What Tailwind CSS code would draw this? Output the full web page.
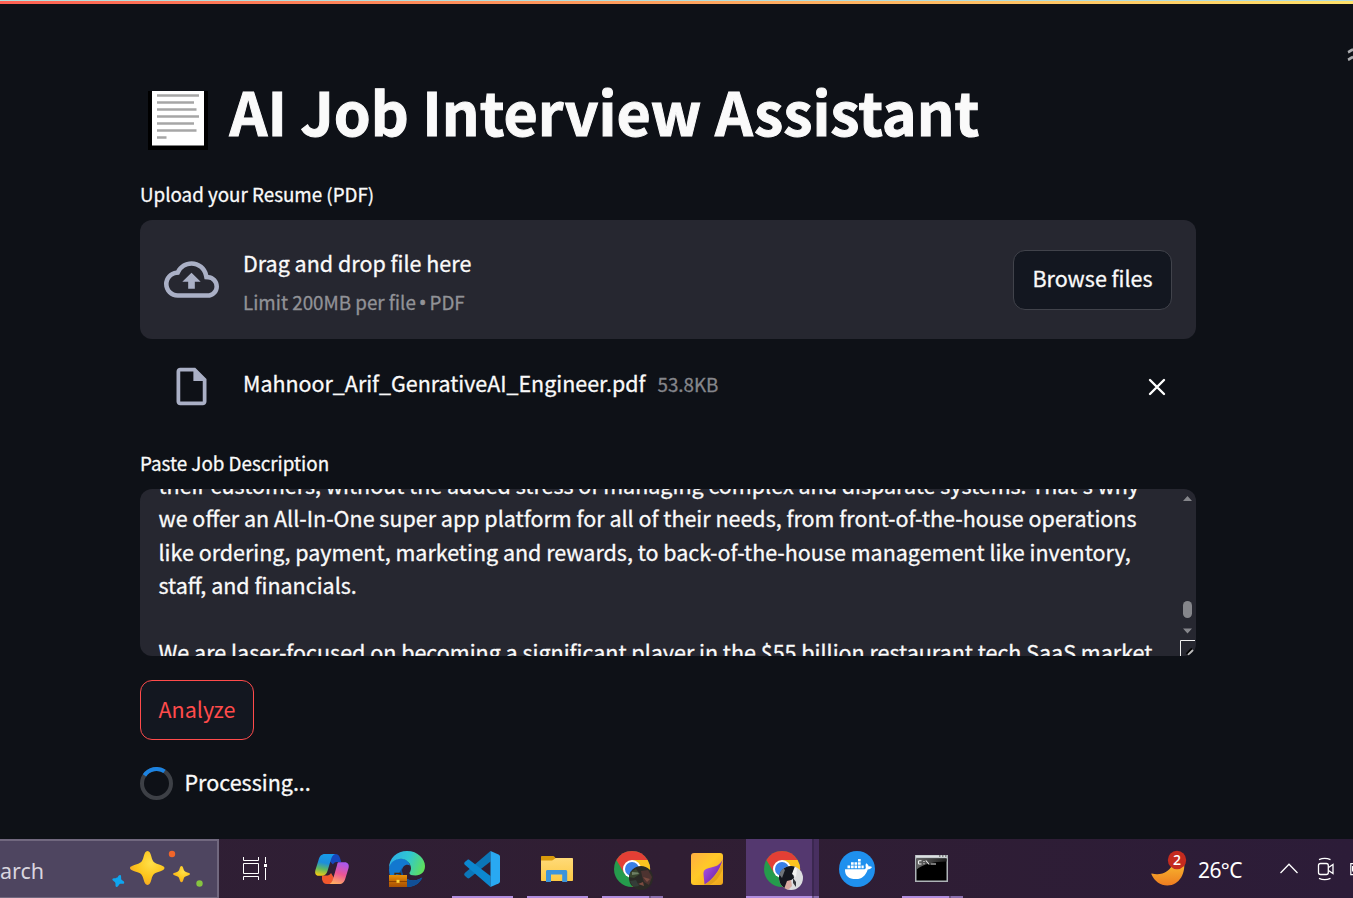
<!DOCTYPE html>
<html lang="en">
<head>
<meta charset="utf-8">
<title>AI Job Interview Assistant</title>
<script src="https://cdn.jsdelivr.net/npm/@tailwindcss/browser@4"></script>
</head>
<body class="w-[1353px] h-[898px] overflow-hidden bg-[#0e1117] text-[#fafafa] font-['Noto_Sans_CJK_SC','Open_Sans',sans-serif] flex flex-col">
<div class="h-px w-full shrink-0 bg-[#b5dedb]"></div>
<div class="h-[3px] w-full shrink-0 bg-linear-to-r from-[#ff6153] via-[#ffa35e] to-[#ffe26a]"></div>

<div class="relative flex-1 min-h-0">
  <svg class="absolute right-0 top-[40px] w-[6px] h-[18px]" viewBox="0 0 6 18" fill="none" stroke="#a9aaad" stroke-width="2.8"><path d="M1 8.200C3 7.500 4 6 6 5.500M1 15.700C3 15 4 13.500 6 13"/></svg>
  <main class="ml-[140px] w-[1056px] flex flex-col">
    <h1 class="mt-[66px] h-[90px] flex items-start whitespace-nowrap">
      <svg class="ml-2 mt-[21px] w-[60px] h-[59px] shrink-0" viewBox="0 0 60 59"><path fill="#000" d="M0 0h60v59H0z"/><path fill="#fff" d="M4 0h52v54.500H4z"/><path d="M9 4.500h42M9 11.500h37M9 18.500h39.500M9 25.500h42M9 32.500h37M9 39.500h39.500M9 46.500h9.500" stroke="#a6a6a6" stroke-width="2.600"/></svg>
      <span class="ml-[21.5px] font-bold text-[59.1px] leading-[80px] [-webkit-text-stroke:1px_#fafafa]">AI Job Interview Assistant</span>
    </h1>
    <div class="mt-[20px] h-[30px] text-[18.8px] leading-[28px] flex [-webkit-text-stroke:0.3px]"><span>Upload your Resume (PDF)</span></div>
    <section class="mt-[10px] h-[119px] rounded-xl bg-[#262730] flex items-center px-6 [-webkit-text-stroke:0.3px]">
      <svg class="w-[55px] h-[55px] shrink-0" viewBox="0 0 24 24" fill="#aab0c6" stroke="none"><path d="M19.350 10.040A7.490 7.490 0 0012 4C9.110 4 6.600 5.640 5.350 8.040A5.994 5.994 0 000 14c0 3.310 2.690 6 6 6h13c2.760 0 5-2.240 5-5 0-2.640-2.050-4.780-4.650-4.960zM19 18H6c-2.210 0-4-1.790-4-4 0-2.050 1.530-3.760 3.560-3.970l1.070-.11.5-.95A5.469 5.469 0 0112 6c2.620 0 4.880 1.860 5.390 4.430l.3 1.500 1.530.11A2.980 2.980 0 0122 15c0 1.650-1.350 3-3 3zM8 13h2.550v3h2.900v-3H16l-4-4z"/></svg>
      <div class="ml-6 flex-1 flex flex-col items-start pt-1">
        <span class="text-[21.5px] leading-[36px]">Drag and drop file here</span>
        <span class="mt-1 h-[34px] text-[18.8px] leading-[34px] text-[#919297]">Limit 200MB per file <span class="font-['Open_Sans'] text-[22px] leading-[20px] -mx-[1.500px]">•</span> PDF</span>
      </div>
      <button class="w-[159px] h-[60px] rounded-xl border border-[#41434b] bg-[#131720] text-[21.5px] flex justify-center leading-[54px]"><span>Browse files</span></button>
    </section>
    <div class="mt-6 h-[48px] flex items-center pl-[29px] pr-6 [-webkit-text-stroke:0.3px]">
      <svg class="w-[45px] h-[45px] shrink-0 -mt-0.5" viewBox="0 0 24 24" fill="#aab0c6"><path d="M6 2c-1.100 0-1.990.9-1.990 2L4 20c0 1.100.89 2 1.990 2H18c1.100 0 2-.9 2-2V8l-6-6H6zm7 1.800V9h5v11H6V4h7z"/></svg>
      <span class="ml-[29px] -mt-[9px] text-[21.450px] leading-[40px]">Mahnoor_Arif_GenrativeAI_Engineer.pdf</span>
      <span class="ml-3 -mt-[7px] text-[18.8px] leading-[40px] text-[#85868b]">53.8KB</span>
      <svg class="ml-auto mr-[6px] w-[18px] h-[18px]" viewBox="0 0 18 18" stroke="#fff" stroke-width="2.400" stroke-linecap="round"><path d="M2 2l14 14M16 2L2 16"/></svg>
    </div>
    <div class="mt-[38px] h-[30px] text-[18.800px] leading-[28px] flex [-webkit-text-stroke:0.3px]"><span>Paste Job Description</span></div>
    <section class="relative mt-[10px] h-[167px] rounded-xl bg-[#262730] overflow-hidden">
      <div class="-mt-[21.5px] pl-[18.5px] text-[21.490px] leading-[33.6px] whitespace-nowrap flex flex-col items-start [-webkit-text-stroke:0.3px]">
        <span>their customers, without the added stress of managing complex and disparate systems. That's why</span>
        <span>we offer an All-In-One super app platform for all of their needs, from front-of-the-house operations</span>
        <span>like ordering, payment, marketing and rewards, to back-of-the-house management like inventory,</span>
        <span>staff, and financials.</span>
        <span>&nbsp;</span>
        <span>We are laser-focused on becoming a significant player in the $55 billion restaurant tech SaaS market</span>
      </div>
      <svg class="absolute right-0 top-0 w-4 h-[167px]" viewBox="0 0 16 167" fill="#85868b"><path d="M3 12l4.500-5 4.500 5zM3 139.500l4.500 5 4.500-5z"/><rect x="3" y="112" width="9" height="17" rx="4.500"/><path d="M.5 167V151.500H15" fill="none" stroke="#eee"/><path d="M6.500 165l5.500-5.500" stroke="#000" stroke-width="2"/><path d="M8 166l5-5" stroke="#bbb" stroke-width="1.800"/></svg>
    </section>
    <button class="mt-6 w-[114px] h-[60px] rounded-xl border border-[#ff4b4b] bg-[#131720] text-[#ff4b4b] text-[21.5px] flex justify-center leading-[56px]"><span>Analyze</span></button>
    <div class="mt-[25px] flex items-center h-[36px]">
      <svg class="w-[33px] h-[33px]" viewBox="0 0 33 33" fill="none" stroke-width="4"><circle cx="16.500" cy="16.500" r="14.500" stroke="#3d4046"/><path d="M4.500 8.400A14.500 14.500 0 0124.500 4.400" stroke="#1c83e1"/></svg>
      <span class="ml-[11.5px] -mt-[2px] text-[21.5px] leading-[36px] [-webkit-text-stroke:0.3px]">Processing...</span>
    </div>
  </main>
</div>

<footer class="h-[59px] shrink-0 flex bg-linear-to-r from-[#2f1f35] via-[#301e33] to-[#2c1c38] font-['Noto_Sans','Open_Sans',sans-serif]">
  <div class="w-[219px] h-full bg-[#4e4560] border-2 border-l-0 border-b border-[#71687f] flex items-start">
    <span class="w-[46px] shrink-0 mt-[14px] text-[21.5px] leading-[32px] text-[#d9d5df] whitespace-nowrap">arch</span>
    <svg class="ml-[64px] mt-[8px] w-[96px] h-[42px] shrink-0" viewBox="110 849 96 42">
      <defs><radialGradient id="gold" cx=".6" cy=".35" r=".7"><stop offset="0" stop-color="#ffe04a"/><stop offset=".6" stop-color="#fcc51c"/><stop offset="1" stop-color="#f5a623"/></radialGradient></defs>
      <path fill="url(#gold)" d="M147.500 851c2 0 3 2 4 6 1 4 2 5.500 6 7 4.500 1.500 7 2.300 7 4s-2.500 2.700-7 4.300c-4 1.400-5 3-6 7-1 3.700-2 5.700-4 5.700s-3-2-4-5.700c-1-4-2-5.600-6-7-4.500-1.600-7.500-2.600-7.500-4.300s3-2.500 7.500-4c4-1.500 5-3 6-7 1-4 2-6 4-6z"/>
      <path fill="url(#gold)" d="M181.500 866c1 0 1.500 1.200 2 3 .5 2 1.300 2.600 3.200 3.200 2 .6 3.300 1 3.300 1.900s-1.300 1.300-3.300 1.900c-1.900.6-2.700 1.200-3.200 3.200-.5 1.800-1 3-2 3s-1.500-1.200-2-3c-.5-2-1.300-2.600-3.200-3.200-2-.6-3.300-1-3.300-1.900s1.300-1.300 3.300-1.900c1.900-.6 2.700-1.200 3.200-3.200.5-1.800 1-3 2-3z"/>
      <path fill="#0fa5ee" transform="rotate(18 118.300 881)" d="M118.300 874.800c1 0 1.300 1 1.700 2.300.4 1.400.8 1.800 2.200 2.200 1.300.4 2.300.7 2.300 1.700s-1 1.300-2.300 1.700c-1.400.4-1.800.8-2.200 2.200-.4 1.300-.7 2.300-1.700 2.300s-1.300-1-1.700-2.300c-.4-1.400-.8-1.800-2.200-2.200-1.300-.4-2.300-.7-2.300-1.700s1-1.300 2.300-1.700c1.400-.4 1.800-.8 2.200-2.200.4-1.300.7-2.300 1.700-2.300z"/>
      <circle cx="172" cy="854" r="3.200" fill="#f1652a"/><circle cx="199.500" cy="883.500" r="3.200" fill="#86c440"/>
    </svg>
  </div>

  <div class="w-[75px] pl-[20px] pt-3"><svg class="w-9 h-9" viewBox="239 851 36 36" fill="none" stroke="#fff" stroke-width="1"><path d="M243.500 857v3.500h15V857M243.500 880v-3.500h15v3.500M243.500 863.500h15v10h-15zM265.500 857v6M265.500 868v12"/><path d="M264 864h3v3h-3z" fill="#fff" stroke="none"/></svg></div>

  <div class="w-[75px] pl-5 pt-3"><svg class="w-9 h-9" viewBox="314 851 36 36">
    <defs><linearGradient id="cpa" x1=".5" y1="0" x2=".3" y2="1"><stop offset="0" stop-color="#169bea"/><stop offset=".4" stop-color="#1d8edb"/><stop offset=".7" stop-color="#62b95d"/><stop offset="1" stop-color="#f2cb13"/></linearGradient>
    <linearGradient id="cpb" x1=".6" y1="0" x2=".3" y2="1"><stop offset="0" stop-color="#a959ed"/><stop offset=".5" stop-color="#ec5595"/><stop offset="1" stop-color="#ffae62"/></linearGradient></defs>
    <path fill="#1648bd" d="M331 854h4c3 0 4 1.500 5 4l1.200 4H338c-3 0-4 .5-5 2.500l-4-4z"/>
    <path fill="#f1582d" d="M322 875.500h4c2.500 0 4-.5 5-2.500l3 5-3 6h-4c-3 0-4-1.500-5-4.500z"/>
    <path fill="url(#cpa)" d="M325 854h10c-2.500 1-3.500 3.500-4.500 7l-3 10c-1 3-2.500 4.700-6 4.700h-3c-3 0-4-2.500-3-6l3-9.500c1.200-4 2.700-6.200 6.500-6.200z"/>
    <path fill="url(#cpb)" d="M339 862.300h5.500c3.500 0 5 2.500 4 6l-3 9.700c-1.200 4-2.700 6-6.500 6h-9.500c2-1 3-3 4-6.500l3-10.500c1-3 .5-4.700 2.500-4.700z"/></svg></div>

  <div class="w-[75px] pl-5 pt-3"><svg class="w-9 h-9" viewBox="389 851 36 36">
    <defs><linearGradient id="ega" x1="0" y1=".3" x2="1" y2=".6"><stop offset="0" stop-color="#2baee8"/><stop offset=".5" stop-color="#31c7d0"/><stop offset="1" stop-color="#5fe05a"/></linearGradient>
    <linearGradient id="egb" x1="0" y1="0" x2="0" y2="1"><stop offset="0" stop-color="#e8920a"/><stop offset=".5" stop-color="#c66b04"/><stop offset="1" stop-color="#a85103"/></linearGradient></defs>
    <path fill="#1278cf" d="M389 870c0-8 6-11.500 11.500-11.500 5 0 9 3 9.500 7-4-2-8 1-8 5.500 0 6 5 9.500 11 9.500 4 0 7-1.500 9-3-2.500 6-8 9.500-15 9.500-10 0-18-7-18-17z"/>
    <path fill="#114f96" d="M402 868c-1 8 5 12.500 11 12.500 4 0 7-1.500 9.500-3-3 6.500-9 9.700-16 9.500-6-2-9-8-8-13z"/>
    <path fill="url(#ega)" d="M389 868c0-10 8-17 18-17 11 0 18 8 18 15 0 6-4 9.500-9.500 9.500-4 0-6-1-6-2.300s1.500-2 1.500-5c0-5-4.500-9.500-10-9.500-6 0-10.500 3.500-12 9.300z"/>
    <path d="M395 875v-1.500h5.500v1.500" fill="none" stroke="#4c2a0a" stroke-width="1.300"/><path fill="url(#egb)" d="M389 875h18v12h-18z"/><path stroke="#8b4303" d="M389 881.500h18"/><path fill="#ffd43a" d="M396.500 879.800h3v3h-3z"/></svg></div>

  <div class="relative w-[75px] pl-5 pt-3"><svg class="w-9 h-9" viewBox="464 851 36 36">
    <path fill="#0b76b8" d="M490.500 851v10.500l-21 16.500c-.8.500-1.500.5-2.200 0l-2.500-2.300c-.8-.8-.8-1.800 0-2.600z"/>
    <path fill="#0c87cf" d="M467.300 860c.7-.6 1.500-.6 2.200 0l21 16v11l-25.700-22.300c-.8-.8-.8-1.800 0-2.600z"/>
    <path fill="#29a9f2" d="M490.500 851l8 3.500c1 .5 1.500 1.200 1.500 2.200v24.600c0 1-.5 1.700-1.500 2.200l-8 3.500z"/></svg>
    <div class="absolute left-2 bottom-0 w-[61px] h-0.5 bg-[#b18edf]"></div></div>

  <div class="relative w-[75px] pl-5 pt-3"><svg class="w-9 h-9" viewBox="539 851 36 36">
    <defs><linearGradient id="fo" x1="0" y1="0" x2="0" y2="1"><stop offset="0" stop-color="#ffda78"/><stop offset="1" stop-color="#fcc944"/></linearGradient></defs>
    <path fill="#d99a0b" d="M542 856h10.500c1.500 0 2 .6 3 2h1v4H541v-5c0-.6.400-1 1-1z"/>
    <path fill="url(#fo)" d="M541 860.500h11c1.500 0 2.500-2.500 4-2.500h16c.6 0 1 .4 1 1v21c0 .6-.4 1-1 1h-30c-.6 0-1-.4-1-1z"/>
    <path fill="#3c94db" d="M547.500 870h18c1 0 1.700.7 1.700 1.700V882h-5v-7.500H551v7.500h-5v-10.300c0-1 .6-1.700 1.500-1.700z"/></svg>
    <div class="absolute left-2 bottom-0 w-[61px] h-0.5 bg-[#b18edf]"></div></div>

  <div class="relative w-[75px] pl-5 pt-3"><svg class="w-9 h-9 overflow-visible" viewBox="614 851 36 36">
    <defs><clipPath id="ava"><circle cx="641" cy="878" r="12"/></clipPath></defs>
    <g id="chrome"><circle cx="632" cy="869" r="18" fill="#259b4c"/><path fill="#e33f35" d="M632 869l-15.600-9A18 18 0 01647.600 860z"/><path fill="#e33f35" d="M616.400 860l8 13.500 7.600-4.500 2-9z"/><path fill="#fcc31f" d="M632 860h15.600a18 18 0 01-15.600 27l7.800-13.500z"/><circle cx="632" cy="869" r="9" fill="#fff"/><circle cx="632" cy="869" r="7" fill="#397fe6"/></g>
    <g clip-path="url(#ava)"><path fill="#2b2a26" d="M629 866h24v24h-24z"/><path fill="#39452f" d="M629 873l7-4 4 5-6 4-5-1z"/><path fill="#6e8065" d="M632 872l6 .5 1 1.500-7 1z"/><path fill="#4d3330" d="M641 871l7-1 4 7-3 8-5-3-2-6z"/><path fill="#7a4b40" d="M643 877l7 2-3 3zM638 884l5-2 1 4z"/><path fill="#343d38" d="M630 881l6-1 3 6-6 1z"/></g></svg>
    <div class="absolute left-2 bottom-0 w-[61px] h-0.5 flex"><div class="w-[47px] bg-[#b18edf]"></div><div class="w-0.5 bg-[#6a5483]"></div><div class="w-3 bg-[#8a6fae]"></div></div></div>

  <div class="w-[75px] pl-5 pt-3"><svg class="w-9 h-9" viewBox="689 851 36 36">
    <defs><linearGradient id="no" x1="0" y1="0" x2="1" y2="1"><stop offset="0" stop-color="#ffae42"/><stop offset=".45" stop-color="#ffc928"/><stop offset="1" stop-color="#eda51c"/></linearGradient><linearGradient id="np" x1="0" y1="0" x2="1" y2="1"><stop offset=".2" stop-color="#a64fe0"/><stop offset=".65" stop-color="#7c2fb5"/></linearGradient></defs>
    <rect x="691" y="853" width="32" height="32" rx="3" fill="url(#no)"/><path fill="#c98712" opacity=".45" d="M723 861c-3 9-9 18-18.500 24h5c6-3 11-9 13.500-17z"/>
    <path fill="url(#np)" d="M723 859c-3 6-7 7.500-12 8.500-5.500 1-8 2.500-7.500 7l1 10c8-4.500 15-13.500 18.500-25.500z"/></svg></div>

  <div class="relative w-[75px]"><div class="absolute left-0.5 top-0 w-[73px] h-full flex"><div class="w-[66px] bg-[#54386f]"></div><div class="w-0.5 bg-[#3b2750]"></div><div class="w-[5px] bg-[#482f60]"></div></div>
    <div class="absolute left-5 top-3"><svg class="w-9 h-9 overflow-visible" viewBox="614 851 36 36"><use href="#chrome"/>
    <g clip-path="url(#ava)"><path fill="#dcdde0" d="M629 866h24v24h-24z"/><path fill="#14171f" d="M629 866h17l-3 6 1 6-4 3-3 9h-8z"/><path fill="#6f7479" d="M629 874l4-6 2 2-3 8z"/><path fill="#f3f3f3" d="M645 866l-3 8 4 3 1-8z"/><path fill="#d8aaa0" d="M637 881l4-1 1 6-4 4-4-1z"/><path fill="#33353b" d="M643 878l3 4 0 5-3-4z"/></g></svg></div>
    <div class="absolute left-0.5 bottom-0 w-[73px] h-0.5 flex"><div class="w-[66px] bg-[#b18edf]"></div><div class="w-0.5 bg-[#6a5483]"></div><div class="w-[5px] bg-[#8a6fae]"></div></div></div>

  <div class="w-[75px] pl-5 pt-3"><svg class="w-9 h-9" viewBox="839 851 36 36">
    <circle cx="857" cy="869" r="18" fill="#1f90ee"/>
    <path fill="#fff" d="M845 869.200h18.500c1.500 0 2.500-.6 2.300-2-.2-1.600-.5-2.600.4-4 1.600 1 2.300 2 2.500 3.200 1.300-.2 2.500 0 3.300.7-.8 1.700-2.200 2.300-4.300 2.300-2 6-5.700 9.600-11.700 9.600-7.500 0-11.300-3.300-11-9.800z"/>
    <path fill="#fff" d="M847.500 865.500h2.700v2.700h-2.700zM851 865.500h2.700v2.700H851zM854.500 865.500h2.700v2.700h-2.700zM858 865.500h2.700v2.700H858zM861.500 865.500h2.200v2.700h-2.200zM851 862.200h2.700v2.600H851zM854.500 862.200h2.700v2.600h-2.700zM858 862.200h2.700v2.600H858zM858 859h2.700v2.600H858z"/></svg></div>

  <div class="relative w-[75px] pl-5 pt-3"><svg class="w-9 h-9" viewBox="914 851 36 36">
    <defs><linearGradient id="cm" x1="0" y1="0" x2="1" y2="0"><stop offset="0" stop-color="#666"/><stop offset="1" stop-color="#1c1c1c"/></linearGradient></defs>
    <path fill="#aeb4b8" d="M915 855h33v27h-33z"/><path fill="#dde0e2" d="M916 855.500h31v2h-31z"/><path fill="#000" d="M916.500 858.500h30v22h-30z"/><path fill="url(#cm)" d="M916.500 858.500h30v3c-14 0-24 3-30 8z"/><path stroke="#333" d="M939 856h1.500M942 856h1.500M945 856h1.500"/>
    <path d="M921.500 860.700h-2.200c-.5 0-.8.300-.8.800v1.700c0 .5.300.8.800.8h2.200M924 861v1M924 863.200v1M925.800 860.500l3.500 4M930.500 864h5.500" fill="none" stroke="#eee" stroke-width="1.100"/></svg>
    <div class="absolute left-2 bottom-0 w-[61px] h-0.5 flex"><div class="w-[47px] bg-[#b18edf]"></div><div class="w-0.5 bg-[#6a5483]"></div><div class="w-3 bg-[#8a6fae]"></div></div></div>

  <div class="relative ml-[181px] w-[38px] mt-[10px] h-[40px]">
    <svg class="w-[38px] h-[40px]" viewBox="1150 849 38 40"><defs><linearGradient id="mo" x1=".5" y1="0" x2=".5" y2="1"><stop offset="0" stop-color="#f9c132"/><stop offset="1" stop-color="#ee7d20"/></linearGradient></defs><path fill="url(#mo)" d="M1151.800 873.500c9 2.500 19-1.500 22-12l10-2c2.500 13-4 26-16.500 26-7 0-13-4.500-15.800-11-.3-.7 0-1.100.3-1z"/><circle cx="1177" cy="860" r="9.200" fill="#c42b1f"/></svg>
    <span class="absolute left-[18px] top-[2px] w-[18px] text-center text-[14px] leading-[18px] font-semibold text-white font-['Open_Sans']">2</span>
  </div>
  <span class="ml-[10px] mt-[15px] w-[46px] text-[21px] leading-[33px] text-white whitespace-nowrap tracking-[-0.6px]">26°C</span>
  <svg class="ml-[35px] mt-[18px] w-[20px] h-[24px] shrink-0" viewBox="1279 857 20 24" fill="none" stroke="#fff" stroke-width="1.300"><path d="M1280.500 873l8.500-8.800 8.500 8.800"/></svg>
  <svg class="ml-[17px] mt-[17px] w-[20px] h-[26px] shrink-0" viewBox="1316 856 20 26" fill="none" stroke="#fff" stroke-width="1.300"><rect x="1318.500" y="863.500" width="9.800" height="11" rx="2"/><path d="M1328.500 867.500l4.500-3v9l-4.500-3M1319 859.700c3.500-1.500 8-1.500 11.500 0M1319 878.300c3.500 1.500 8 1.500 11.500 0"/></svg>
  <svg class="ml-[14px] mt-[22px] w-[3px] h-[16px] shrink-0" viewBox="0 0 3 16" fill="none" stroke="#fff" stroke-width="1.200"><path d="M3 2.600H.8v11H3M3 5.500H2.600v5"/></svg>
</footer>
</body>
</html>
